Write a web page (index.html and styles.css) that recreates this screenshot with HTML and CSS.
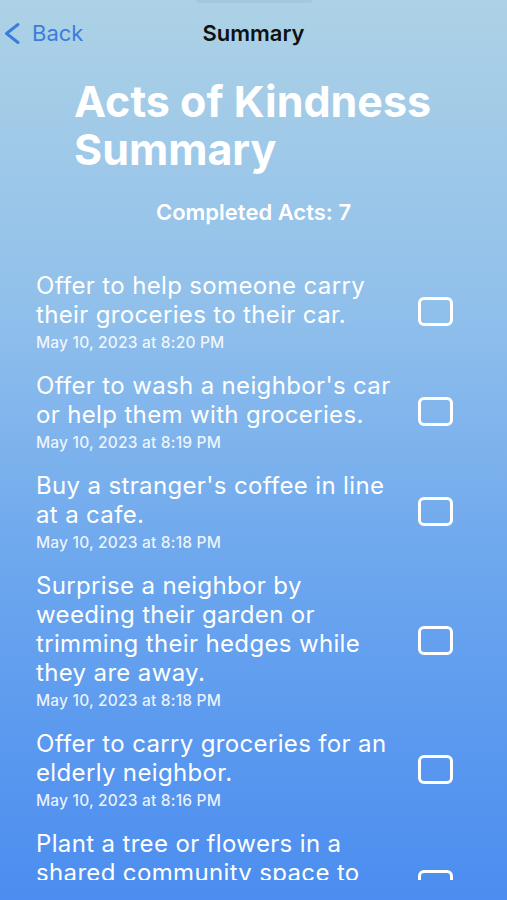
FILE: index.html
```html
<!DOCTYPE html>
<html lang="en">
<head>
<meta charset="utf-8">
<title>Summary</title>
<link rel="stylesheet" href="styles.css">
</head>
<body>
<div class="screen">
  <div class="notch"></div>
  <header class="nav">
    <a class="back" href="#">
      <svg class="chev" width="20" height="23" viewBox="0 0 20 23"><path d="M16 2.5 L4.5 11.5 L16 20.5" fill="none" stroke="currentColor" stroke-width="3" stroke-linecap="round" stroke-linejoin="round"/></svg>
      <span>Back</span>
    </a>
    <div class="nav-title">Summary</div>
  </header>
  <h1 class="title">Acts of Kindness Summary</h1>
  <p class="count">Completed Acts: 7</p>
  <ul class="list">
    <li class="item">
      <div class="item-body">
        <div class="item-text">Offer to help someone carry their groceries to their car.</div>
        <div class="item-date">May 10, 2023 at 8:20 PM</div>
      </div>
      <span class="check"></span>
    </li>
    <li class="item">
      <div class="item-body">
        <div class="item-text">Offer to wash a neighbor's car or help them with groceries.</div>
        <div class="item-date">May 10, 2023 at 8:19 PM</div>
      </div>
      <span class="check"></span>
    </li>
    <li class="item">
      <div class="item-body">
        <div class="item-text">Buy a stranger's coffee in line at a cafe.</div>
        <div class="item-date">May 10, 2023 at 8:18 PM</div>
      </div>
      <span class="check"></span>
    </li>
    <li class="item">
      <div class="item-body">
        <div class="item-text">Surprise a neighbor by weeding their garden or trimming their hedges while they are away.</div>
        <div class="item-date">May 10, 2023 at 8:18 PM</div>
      </div>
      <span class="check"></span>
    </li>
    <li class="item">
      <div class="item-body">
        <div class="item-text">Offer to carry groceries for an elderly neighbor.</div>
        <div class="item-date">May 10, 2023 at 8:16 PM</div>
      </div>
      <span class="check"></span>
    </li>
    <li class="item">
      <div class="item-body">
        <div class="item-text">Plant a tree or flowers in a shared community space to beautify the neighborhood.</div>
        <div class="item-date">May 10, 2023 at 8:15 PM</div>
      </div>
      <span class="check"></span>
    </li>
  </ul>
</div>
</body>
</html>
```
FILE: styles.css
```css
* { box-sizing: border-box; }
html, body { margin: 0; padding: 0; }
body {
  width: 507px;
  height: 900px;
  overflow: hidden;
  font-family: Inter, "Liberation Sans", sans-serif;
  background: linear-gradient(to bottom, #add2e6 0%, #8fbfeb 35%, #6aa5ee 65%, #4b8df0 100%);
  color: #fff;
}
.screen {
  height: 900px;
  display: flex;
  flex-direction: column;
}
.notch {
  width: 116px;
  height: 3px;
  margin: 0 auto;
  background: rgba(60, 100, 130, 0.08);
  border-radius: 0 0 3px 3px;
  flex: none;
}
.nav {
  flex: none;
  height: 44px;
  margin-top: 8px;
  display: grid;
  grid-template-columns: 1fr auto 1fr;
  align-items: center;
}
.back {
  display: flex;
  align-items: center;
  gap: 10px;
  padding-left: 2px;
  color: #3b7ddd;
  text-decoration: none;
  font-size: 22px;
}
.chev { display: block; }
.nav-title {
  color: #111;
  font-weight: 600;
  font-size: 22px;
}
.title {
  flex: none;
  margin: 22px 0 0 74px;
  font-size: 43px;
  line-height: 48px;
  font-weight: 700;
  width: 420px;
}
.count {
  flex: none;
  margin: 25px 0 0;
  text-align: center;
  font-size: 22px;
  line-height: 28px;
  font-weight: 600;
}
.list {
  list-style: none;
  margin: 45px 0 0;
  padding: 0 54px 0 36px;
  height: 609px;
  flex: none;
  overflow: hidden;
  display: flex;
  flex-direction: column;
  gap: 19px;
}
.item {
  display: flex;
  align-items: center;
  gap: 18px;
  flex: none;
}
.item-body { flex: 1; }
.item-text {
  font-size: 24px;
  line-height: 29px;
  letter-spacing: 0.35px;
}
.item-date {
  margin-top: 5px;
  font-size: 15.5px;
  line-height: 18px;
  font-weight: 500;
  letter-spacing: 0.2px;
  color: rgba(255, 255, 255, 0.88);
}
.check {
  flex: none;
  width: 35px;
  height: 29px;
  border: 3px solid #fff;
  border-radius: 6px;
}
```
